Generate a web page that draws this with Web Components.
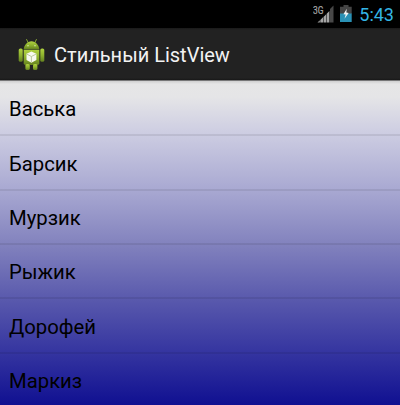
<!DOCTYPE html>
<html lang="ru"><head><meta charset="utf-8"><title>Стильный ListView</title>
<style>html,body{margin:0;background:#000}body{font-family:Roboto,"Noto Sans",sans-serif;height:405px;overflow:hidden}</style></head>
<body>
<phone-screen>
<status-bar slot="status">5:43</status-bar>
<action-bar slot="bar">Стильный ListView</action-bar>
<list-row>Васька</list-row><list-row>Барсик</list-row><list-row>Мурзик</list-row><list-row>Рыжик</list-row><list-row>Дорофей</list-row><list-row>Маркиз</list-row>
</phone-screen>
<script>
const define = (name, html) => {
  const t = document.createElement('template');
  t.innerHTML = html;
  customElements.define(name, class extends HTMLElement {
    constructor() {
      super();
      this.attachShadow({mode: 'open'}).append(t.content.cloneNode(true));
    }
  });
};
define('phone-screen', `<style>
:host{display:flex;flex-direction:column;width:400px;height:405px;overflow:hidden;background:#000}
.list{flex:1;min-height:0;box-sizing:border-box;padding-top:.8px;overflow:hidden;background:linear-gradient(#cfcfcf 0,#e6e6e6 3px,#e5e5e7 16px,#cdcde2 52px,#a9a9d2 108px,#8383be 162px,#5a5aad 217px,#3535a0 271px,#101091 324px)}
</style><slot name="status"></slot><slot name="bar"></slot><div class="list"><slot></slot></div>`);
define('signal-icon', `<style>:host{display:block;width:22px;height:20px}svg{display:block}text{font:10.5px Roboto,sans-serif;fill:#a8a8a8}</style>
<svg width="22" height="20"><text x="0" y="9.5" textLength="10.5" lengthAdjust="spacingAndGlyphs" stroke="#a8a8a8" stroke-width=".2">3G</text>
<path d="M4.5 18.5h2.3v-2.3zM7.3 18.5h2.7v-5.2l-2.7 2.6zM10.5 18.5h2.7v-8.2l-2.7 2.6zM13.7 18.5h2.7v-11.4l-2.7 2.7z" fill="#a4a4a4"/><path d="M17 18.5h3.5V1.5L17 5z" fill="#484848"/></svg>`);
define('battery-icon', `<style>:host{display:block;width:12px;height:18px}svg{display:block}</style>
<svg width="12" height="18"><path d="M3.5 0h5v1.7H11.7v7.3H0V1.7h3.5z" fill="#454545"/><path d="M0 8.5h11.7V17H0z" fill="#2a91b5"/><path d="M6.8 3.8L3.4 9.3l2.3.2-1.2 4.2L8.7 8 6.3 7.6z" fill="#f4f4f4"/></svg>`);
define('status-bar', `<style>
:host{display:flex;height:28px;flex:none;box-sizing:border-box;padding:5px 6px 0 0;justify-content:flex-end;background:#000;color:#33b5e5;font-size:18px;line-height:20px}
signal-icon{margin:-1px 5px 0 0}battery-icon{margin-right:7px}
</style><signal-icon></signal-icon><battery-icon></battery-icon><span><slot></slot></span>`);
define('droid-icon', `<style>:host{display:block;width:28px;height:32px}svg{display:block}</style>
<svg width="28" height="32"><defs><linearGradient id="g" x2="0" y2="1"><stop stop-color="#b0d240"/><stop offset=".5" stop-color="#8fb32e"/><stop offset="1" stop-color="#63801f"/></linearGradient></defs>
<path d="M8.6 .5l2 4M18.4 .5l-2 4" stroke="#86a436" stroke-width="1" stroke-linecap="round"/>
<g fill="url(#g)"><path d="M5.7 10.3C6 6 9.4 2.2 13.5 2.2s7.5 3.8 7.8 8.1z"/><path d="M5.7 10.8h15.6v13.4q0 1.8-1.8 1.8H7.5q-1.8 0-1.8-1.8z"/><rect x=".7" y="9.4" width="4" height="13.4" rx="1.6"/><rect x="22.3" y="9.4" width="4" height="13.4" rx="1.6"/><rect x="7.4" y="25" width="4.4" height="6" rx="1.6"/><rect x="15" y="25" width="4.4" height="6" rx="1.6"/></g>
<path d="M9.4 6.8h1.2M16.4 6.8h1.2" stroke="#f0f5df" stroke-width="1.1"/>
<path d="M13.4 12.4l5 2.3v6.3l-5 2.7-4.9-2.7v-6.3z" fill="#f8faf0"/><path d="M8.7 15l4.7 2.5 4.8-2.5M13.4 17.5v5.8" fill="none" stroke="#b4c496" stroke-width=".9"/></svg>`);
define('action-bar', `<style>
:host{display:flex;flex:none;height:53px;box-sizing:border-box;align-items:center;padding:1px 0 0 18px;gap:8px;background:linear-gradient(#191919 0,#222 2px,#222 50px,#181818 52px,#777 52px);color:#f3f3f3;font-size:20px;line-height:24px;white-space:nowrap}
</style><droid-icon></droid-icon><span><slot></slot></span>`);
define('list-row', `<style>
:host{display:flex;height:54.4px;box-sizing:border-box;align-items:center;padding:2.4px 9px 0 9px;border-bottom:2px solid rgba(0,0,0,.075);color:#000;font-size:20.3px;line-height:24px}
</style><slot></slot>`);
</script></body></html>
